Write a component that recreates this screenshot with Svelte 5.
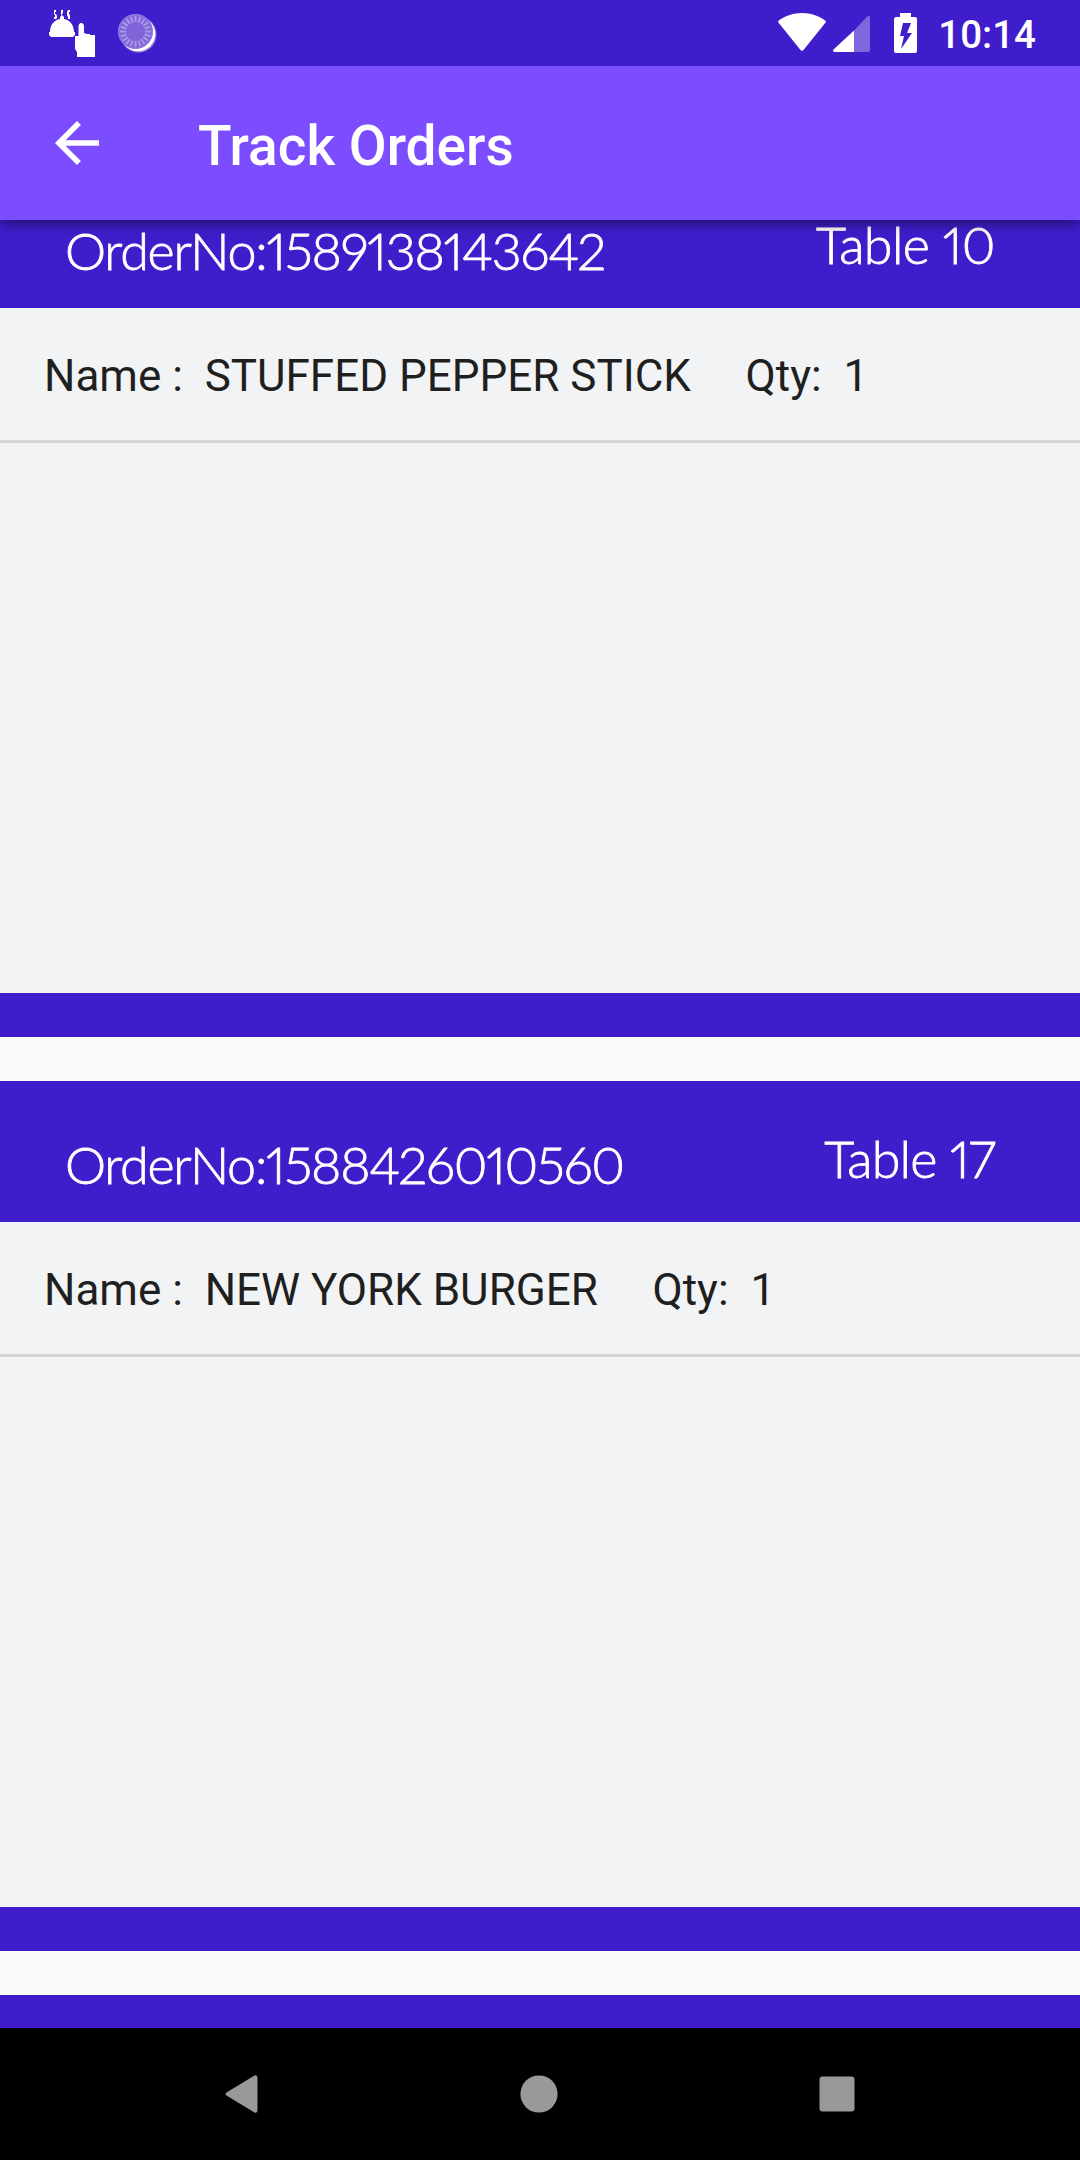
<script lang="ts">
  interface Item { name: string; qty: number }
  interface Order { no: string; table: number; spacing: number; tableSpacing: number; items: Item[] }

  const orders: Order[] = [
    { no: '1589138143642', table: 10, spacing: -1.2, tableSpacing: -0.6, items: [{ name: 'STUFFED PEPPER STICK', qty: 1 }] },
    { no: '1588426010560', table: 17, spacing: -1.25, tableSpacing: -0.8, items: [{ name: 'NEW YORK BURGER', qty: 1 }] },
  ];

  // Tick marks round the notification spinner
  const ticks = Array.from({ length: 20 }, (_, i) => i * 18);
</script>

<div class="screen">
  <header class="status">
    <div class="notifications">
      <svg class="dish" width="47" height="48" viewBox="0 0 47 48" fill="#fff">
        <path d="M5 1h2v2H6v2h1l1 2v2l-1 1H5V8h1V6L5 5zM12 1h2v3l-1 1v1h-1zM19 1h2v2h-1v2l1 1v4h-2V8l-1-2V3z" />
        <path d="M0 23h1c0-7 4-12 10-13V8l2-2 2 2v2c6 1 10 6 10 13h1v3l-2 2H2l-2-2z" />
        <path d="M29.500 17q0-2 2-3h1.500q2 1 2 3v7l3 1h3v1h5v22H28v-5l-2-3V27h3.500z" />
      </svg>
      <svg class="spinner" width="40" height="42" viewBox="0 0 40 42">
        <circle cx="20.5" cy="21.5" r="18" fill="#fff" opacity=".45" />
        <circle cx="20" cy="21" r="17.3" fill="#fff" />
        <circle cx="17.5" cy="18.5" r="17.3" fill="#8063d9" />
        <circle cx="17.5" cy="18.5" r="16.8" fill="none" stroke="#9078e0" stroke-width="1.4" />
        {#each ticks as a}
          <path d="M17.5 3v6" stroke="#a998e7" stroke-width="2" transform="rotate({a} 17.5 18.5)" />
        {/each}
      </svg>
    </div>
    <div class="system">
      <svg width="48" height="40" viewBox="0 0 48 40" fill="#fff">
        <path d="M.6 9.7C-.1 9 0 8 .8 7.400 7.500 2.700 15.500 0 24 0s16.500 2.700 23.200 7.400c.8.600.9 1.600.2 2.300L25.500 37c-.8 1-2.200 1-3 0z" />
      </svg>
      <svg class="signal" width="38" height="38" viewBox="0 0 38 38" fill="#fff">
        <path opacity=".33" d="M21 15.500 34.500 1.200Q37 0 37 2.500V35q0 2-2 2H21z" />
        <path d="M21 15.500V37H1.500Q-.8 36.500.5 34.600z" />
      </svg>
      <svg class="battery" width="24" height="40" viewBox="0 0 24 40" fill="#fff">
        <path fill-rule="evenodd" d="M6 0h11v4h4q2 0 2 2v32q0 2-2 2H2q-2 0-2-2V6q0-2 2-2h4zM9 10 6 23h4L7 36 18 20h-5l4-10z" />
      </svg>
      <span class="time">10:14</span>
    </div>
  </header>

  <nav class="appbar">
    <svg width="66" height="66" viewBox="0 0 24 24" fill="#fff">
      <path d="M20 11H7.830l5.590-5.590L12 4l-8 8 8 8 1.410-1.410L7.830 13H20z" />
    </svg>
    <h1>Track Orders</h1>
  </nav>

  <main class="list">
    {#each orders as o}
      <section class="card">
        <div class="head">
          <span class="no" style="letter-spacing: {o.spacing}px">OrderNo:{o.no}</span>
          <span class="table" style="letter-spacing: {o.tableSpacing}px">Table {o.table}</span>
        </div>
        <div class="items">
          {#each o.items as it}
            <div class="row">{`Name :  ${it.name}     Qty:  ${it.qty}`}</div>
          {/each}
        </div>
      </section>
    {/each}
    <section class="card"></section>
  </main>

  <footer class="navbar">
    <svg width="34" height="38" viewBox="0 0 34 38" fill="#999">
      <path d="M1.800 17.200 29.500.6Q32.500 -.5 32.500 3v32q0 3.500-3 2.400L1.800 20.800q-2.600-1.800 0-3.600z" />
    </svg>
    <svg width="38" height="38" viewBox="0 0 38 38" fill="#999"><circle cx="19" cy="19" r="18.600" /></svg>
    <svg width="36" height="36" viewBox="0 0 36 36" fill="#999"><rect x=".5" y=".5" width="35" height="35" rx="3" /></svg>
  </footer>
</div>

<style>
  :global(body) { margin: 0; background: #000; }
  .screen {
    width: 1080px;
    height: 2160px;
    display: flex;
    flex-direction: column;
    overflow: hidden;
    font-family: Roboto, sans-serif;
    background: #fafafa;
  }
  svg { display: block; flex: none; }

  .status {
    height: 66px;
    flex: none;
    display: flex;
    justify-content: space-between;
    background: #3f1dcb;
    color: #fff;
    padding: 0 44px 0 49px;
    z-index: 3;
  }
  .notifications { display: flex; align-items: flex-start; gap: 22px; }
  .dish { margin-top: 9px; }
  .spinner { margin-top: 13px; }
  .system { display: flex; align-items: flex-start; padding-top: 13px; }
  .signal { margin: 2px 0 0 7px; }
  .battery { margin-left: 23px; }
  .time {
    margin: -1px 0 0 20px;
    font-size: 38.500px;
    font-weight: 500;
    line-height: 45px;
  }

  .appbar {
    height: 154px;
    flex: none;
    display: flex;
    align-items: center;
    gap: 88px;
    padding-left: 44px;
    background: #7c4dff;
    box-shadow: 0 3px 13px rgba(0, 0, 0, 0.5);
    z-index: 2;
  }
  h1 {
    margin: 0;
    padding-top: 5px;
    color: #fff;
    font-size: 55px;
    font-weight: 500;
    line-height: 64px;
  }

  .list {
    flex: 1;
    min-height: 0;
    margin-top: -53px;
    display: flex;
    flex-direction: column;
    gap: 44px;
    overflow: hidden;
  }
  .card {
    height: 870px;
    flex: none;
    box-sizing: border-box;
    padding-bottom: 44px;
    display: flex;
    flex-direction: column;
    background: #3f1dcb;
  }
  .head {
    height: 141px;
    flex: none;
    box-sizing: border-box;
    padding: 51px 85px 0 65px;
    display: flex;
    justify-content: space-between;
    color: #fff;
    font-family: "Coming Soon", Lato, sans-serif;
    font-weight: 300;
    font-size: 52px;
    line-height: 64px;
    font-feature-settings: "pnum";
    -webkit-text-stroke: 0.8px #fff;
    white-space: nowrap;
  }
  .table { margin-top: -6px; }
  .items { flex: 1; background: #f1f3f5; }
  .row {
    height: 132px;
    box-sizing: content-box;
    border-bottom: 3px solid #d4d5d7;
    padding-left: 44px;
    color: #1f1f1f;
    font-size: 44px;
    line-height: 137px;
    white-space: pre;
  }

  .navbar {
    height: 132px;
    flex: none;
    display: flex;
    align-items: center;
    justify-content: space-between;
    padding: 0 225px 0 225px;
    background: #000;
    z-index: 2;
  }
</style>
